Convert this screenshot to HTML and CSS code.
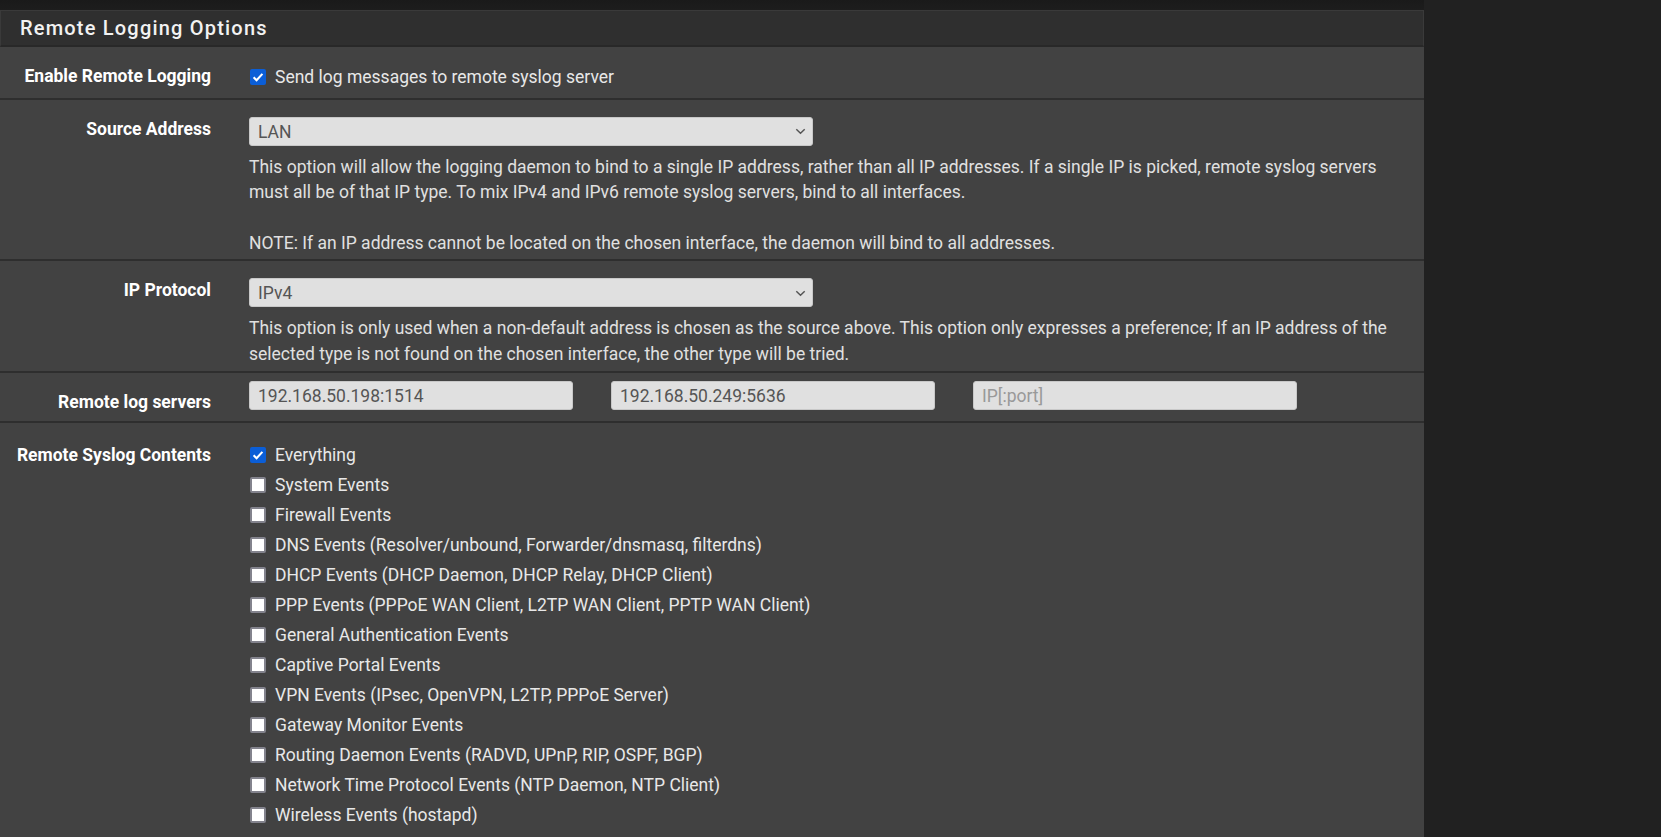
FILE: index.html
```html
<!DOCTYPE html>
<html lang="en">
<head>
  <meta charset="UTF-8">
  <title>Remote Logging Options</title>
  <link rel="stylesheet" href="styles.css">
</head>
<body>
  <div class="topbar"></div>

  <div class="panel">
    <div class="panel-heading">
      <h2 class="panel-title">Remote Logging Options</h2>
    </div>

    <div class="panel-body">
      <div class="form-group row-enable">
        <div class="form-label">Enable Remote Logging</div>
        <div class="form-content">
          <label class="chk">
            <span class="box checked"><svg viewBox="0 0 16 16"><path d="M3.6 8.3l3 3 5.8-6.4"/></svg></span>
            Send log messages to remote syslog server
          </label>
        </div>
      </div>

      <div class="form-group row-source">
        <div class="form-label">Source Address</div>
        <div class="form-content">
          <div class="select">
            <span>LAN</span>
            <svg class="caret" viewBox="0 0 12 8"><path d="M1.2 1.5l4.8 4.6 4.8-4.6"/></svg>
          </div>
          <p class="help">This option will allow the logging daemon to bind to a single IP address, rather than all IP addresses. If a single IP is picked, remote syslog servers must all be of that IP type. To mix IPv4 and IPv6 remote syslog servers, bind to all interfaces.<br><br>NOTE: If an IP address cannot be located on the chosen interface, the daemon will bind to all addresses.</p>
        </div>
      </div>

      <div class="form-group">
        <div class="form-label">IP Protocol</div>
        <div class="form-content">
          <div class="select">
            <span>IPv4</span>
            <svg class="caret" viewBox="0 0 12 8"><path d="M1.2 1.5l4.8 4.6 4.8-4.6"/></svg>
          </div>
          <p class="help">This option is only used when a non-default address is chosen as the source above. This option only expresses a preference; If an IP address of the selected type is not found on the chosen interface, the other type will be tried.</p>
        </div>
      </div>

      <div class="form-group row-servers">
        <div class="form-label">Remote log servers</div>
        <div class="form-content servers">
          <input class="field" type="text" value="192.168.50.198:1514">
          <input class="field" type="text" value="192.168.50.249:5636">
          <input class="field" type="text" placeholder="IP[:port]">
        </div>
      </div>

      <div class="form-group row-contents">
        <div class="form-label">Remote Syslog Contents</div>
        <div class="form-content checklist">
          <label class="chk"><span class="box checked"><svg viewBox="0 0 16 16"><path d="M3.6 8.3l3 3 5.8-6.4"/></svg></span>Everything</label>
          <label class="chk"><span class="box"></span>System Events</label>
          <label class="chk"><span class="box"></span>Firewall Events</label>
          <label class="chk"><span class="box"></span>DNS Events (Resolver/unbound, Forwarder/dnsmasq, filterdns)</label>
          <label class="chk"><span class="box"></span>DHCP Events (DHCP Daemon, DHCP Relay, DHCP Client)</label>
          <label class="chk"><span class="box"></span>PPP Events (PPPoE WAN Client, L2TP WAN Client, PPTP WAN Client)</label>
          <label class="chk"><span class="box"></span>General Authentication Events</label>
          <label class="chk"><span class="box"></span>Captive Portal Events</label>
          <label class="chk"><span class="box"></span>VPN Events (IPsec, OpenVPN, L2TP, PPPoE Server)</label>
          <label class="chk"><span class="box"></span>Gateway Monitor Events</label>
          <label class="chk"><span class="box"></span>Routing Daemon Events (RADVD, UPnP, RIP, OSPF, BGP)</label>
          <label class="chk"><span class="box"></span>Network Time Protocol Events (NTP Daemon, NTP Client)</label>
          <label class="chk"><span class="box"></span>Wireless Events (hostapd)</label>
        </div>
      </div>
    </div>
  </div>
</body>
</html>
```

FILE: styles.css
```css
* {
  margin: 0;
  padding: 0;
  box-sizing: border-box;
}

body {
  background: #212121;
  color: #e2e2e2;
  font-family: 'Roboto', 'Liberation Sans', sans-serif;
  font-size: 17.5px;
  width: 1661px;
  height: 837px;
  overflow: hidden;
}

.topbar {
  width: 1424px;
  height: 10px;
  background: linear-gradient(180deg, #1a1a1a, #1d1d1d);
}

.panel {
  width: 1424px;
}

.panel-heading {
  height: 37px;
  background: #2f2f2f;
  border: 1px solid #3a3a3a;
  border-bottom: 2px solid #282828;
  padding-left: 19px;
  display: flex;
  align-items: center;
}

.panel-title {
  font-size: 20px;
  font-weight: 500;
  letter-spacing: 1.2px;
  color: #f2f2f2;
}

.form-group {
  display: flex;
  gap: 38px;
  background: #424242;
  border-bottom: 2px solid #2e2e2e;
  padding: 17px 15px 4px 0;
}

.form-label {
  width: 211px;
  flex: none;
  text-align: right;
  font-weight: 700;
  line-height: 25px;
  color: #fff;
}

.form-content {
  flex: 1;
  min-width: 0;
}

.row-enable {
  padding-bottom: 8.5px;
}

.row-source {
  padding-bottom: 3px;
}

.chk {
  display: flex;
  align-items: center;
  gap: 9px;
  height: 25px;
  color: #e8e8e8;
  padding-left: 1px;
}

.box {
  width: 16px;
  height: 16px;
  flex: none;
  background: #fff;
  border: 2px solid #83838d;
  border-radius: 2px;
  display: flex;
}

.box.checked {
  background: #0b5ed7;
  border-color: #0b5ed7;
}

.box svg {
  width: 16px;
  height: 16px;
  margin: -2px;
  fill: none;
  stroke: #fff;
  stroke-width: 2.1;
}

.select {
  width: 564px;
  height: 29.5px;
  background: #e0e0e0;
  border: 1px solid #c8c8c8;
  border-radius: 3px;
  color: #555;
  display: flex;
  align-items: center;
  justify-content: space-between;
  padding: 1px 6px 0 8px;
}

.caret {
  width: 11px;
  height: 7px;
  fill: none;
  stroke: #555;
  stroke-width: 1.7;
}

.help {
  margin-top: 9px;
  line-height: 25.2px;
  color: #e0e0e0;
}

.servers {
  display: flex;
  gap: 38px;
  margin-top: -9px;
}

.row-servers {
  padding-bottom: 6px;
}

.field {
  width: 324px;
  height: 29px;
  background: #e0e0e0;
  border: 1px solid #c8c8c8;
  border-radius: 3px;
  color: #555;
  font: inherit;
  padding: 1px 8px 0;
  outline: none;
}

.field::placeholder {
  color: #999;
}

.row-contents {
  padding-top: 20px;
  padding-bottom: 30px;
}

.checklist .chk {
  height: 30px;
}

.checklist .chk:first-child {
  margin-top: -2.5px;
}
```
